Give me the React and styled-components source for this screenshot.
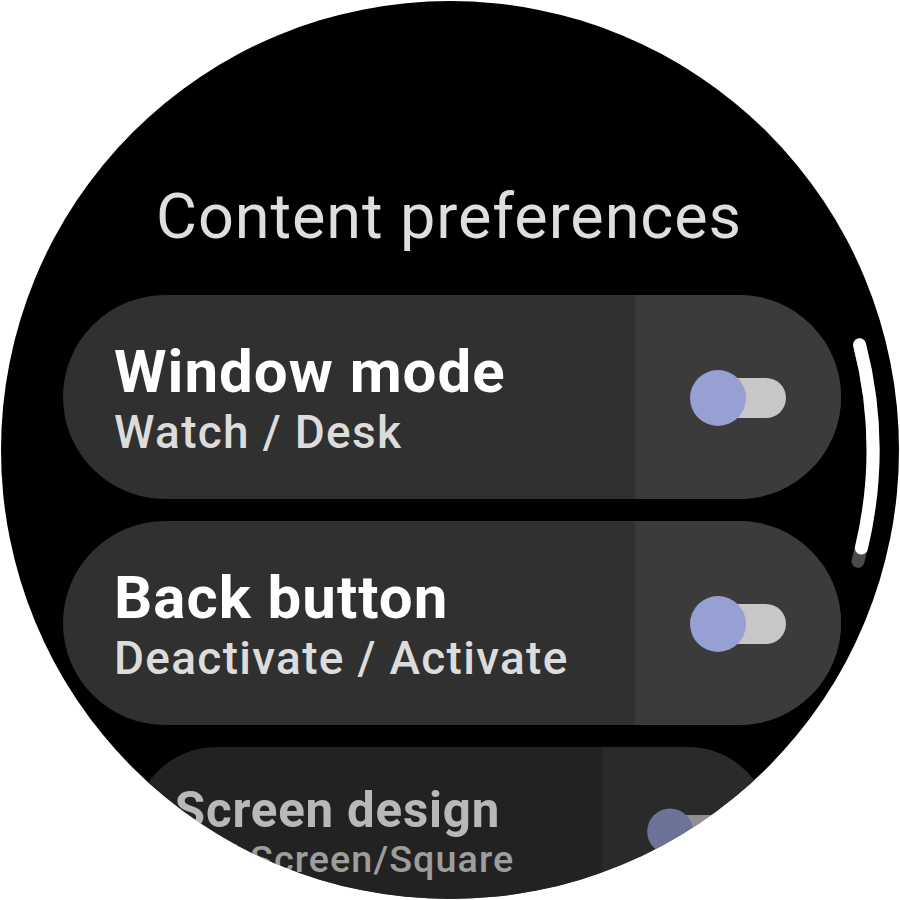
import styled, { createGlobalStyle } from "styled-components";

const GlobalStyle = createGlobalStyle`
  html, body {
    margin: 0;
    padding: 0;
    background: #ffffff;
  }
  body {
    font-family: Roboto, "Liberation Sans", sans-serif;
  }
`;

const settings = [
  { title: "Window mode", subtitle: "Watch / Desk", checked: false },
  { title: "Back button", subtitle: "Deactivate / Activate", checked: false },
  { title: "Screen design", subtitle: "Full Screen/Square", checked: false, edge: true },
];

function ScrollIndicator() {
  // arcs are concentric with the watch face (page coords, centre 450,450)
  return (
    <IndicatorSvg viewBox="2 2 896 896">
      <path
        d="M 858.7 345 A 422 422 0 0 1 857.1 561"
        fill="none"
        stroke="#4a4a4a"
        strokeWidth="13"
        strokeLinecap="round"
      />
      <path
        d="M 858.7 345 A 422 422 0 0 1 860.5 547.8"
        fill="none"
        stroke="#ffffff"
        strokeWidth="13"
        strokeLinecap="round"
      />
    </IndicatorSvg>
  );
}

function ToggleChip({ title, subtitle, checked, edge }) {
  return (
    <Chip $edge={edge}>
      <ChipLabel>
        <ChipTitle>{title}</ChipTitle>
        <ChipSubtitle>{subtitle}</ChipSubtitle>
      </ChipLabel>
      <ToggleArea>
        <Switch $checked={checked}>
          <Thumb $checked={checked} />
        </Switch>
      </ToggleArea>
    </Chip>
  );
}

export default function App() {
  return (
    <>
      <GlobalStyle />
      <Page>
        <WatchFace>
          <Heading>Content preferences</Heading>
          <ChipList>
            {settings.map((s) => (
              <ToggleChip key={s.title} {...s} />
            ))}
          </ChipList>
          <ScrollIndicator />
        </WatchFace>
      </Page>
    </>
  );
}

const Page = styled.div`
  width: 900px;
  height: 900px;
  display: flex;
  align-items: center;
  justify-content: center;
  background: #ffffff;
`;

const WatchFace = styled.div`
  position: relative;
  width: 898px;
  height: 898px;
  border-radius: 50%;
  background: #000000;
  overflow: hidden;
  display: flex;
  flex-direction: column;
  align-items: center;
  padding-top: 180px;
  box-sizing: border-box;
`;

const Heading = styled.div`
  font-size: 63px;
  line-height: 72px;
  font-weight: 400;
  letter-spacing: 0.9px;
  color: #dedede;
  text-align: center;
  margin-left: -2px;
`;

const ChipList = styled.div`
  margin-top: 42px;
  display: flex;
  flex-direction: column;
  gap: 22px;
  width: 778px;
  margin-left: 4px;
`;

const Chip = styled.div`
  height: 204px;
  border-radius: 102px;
  overflow: hidden;
  display: grid;
  grid-template-columns: 1fr 206px;
  background: #303030;
  flex-shrink: 0;
  transform-origin: top center;
  transform: ${(p) => (p.$edge ? "scale(0.82)" : "none")};
  opacity: ${(p) => (p.$edge ? 0.72 : 1)};
`;

const ChipLabel = styled.div`
  display: flex;
  flex-direction: column;
  justify-content: center;
  padding-left: 51px;
  padding-top: 8px;
  white-space: nowrap;
`;

const ChipTitle = styled.div`
  font-size: 60px;
  line-height: 62px;
  font-weight: 700;
  letter-spacing: 1px;
  color: #ffffff;
`;

const ChipSubtitle = styled.div`
  font-size: 46px;
  line-height: 58px;
  font-weight: 500;
  letter-spacing: 1.3px;
  color: #dcdcdc;
`;

const ToggleArea = styled.div`
  background: #3b3b3b;
  display: flex;
  align-items: center;
  justify-content: center;
`;

const Switch = styled.div`
  position: relative;
  width: 86px;
  height: 40px;
  border-radius: 20px;
  background: ${(p) => (p.$checked ? "#b9c0ee" : "#c7c7c7")};
  margin-left: 10px;
  margin-top: 2px;
`;

const Thumb = styled.div`
  position: absolute;
  top: -8px;
  left: ${(p) => (p.$checked ? "40px" : "-10px")};
  width: 56px;
  height: 56px;
  border-radius: 50%;
  background: #97a0d3;
`;

const IndicatorSvg = styled.svg`
  position: absolute;
  inset: 0;
  width: 100%;
  height: 100%;
  pointer-events: none;
`;
